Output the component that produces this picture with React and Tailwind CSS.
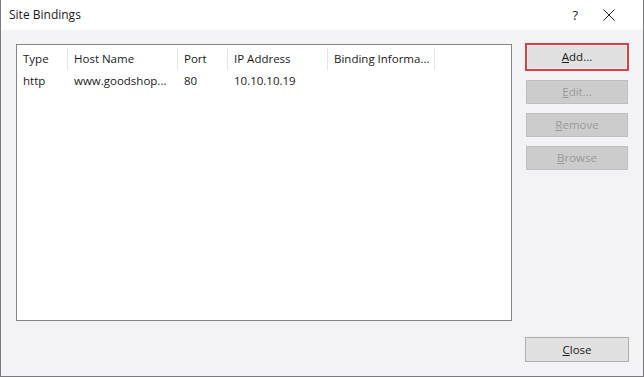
export default function App() {
  const cols = [
    { label: "Type", w: "w-[51px]" },
    { label: "Host Name", w: "w-[110px]" },
    { label: "Port", w: "w-[50px]" },
    { label: "IP Address", w: "w-[100px]" },
    { label: "Binding Informa...", w: "w-[107px]" },
  ];
  const row = ["http", "www.goodshop...", "80", "10.10.10.19", ""];

  return (
    <div className="w-[644px] h-[377px] bg-[#f3f2f5] border-l border-r border-b border-[#7a7a7a] flex flex-col text-[#1a1a1a] text-[11.5px] leading-none" style={{ fontFamily: "'Segoe UI','Open Sans',sans-serif" }}>
      {/* ── Title bar ── */}
      <div className="h-[30px] bg-white flex items-center pl-[8px] shrink-0">
        <span className="text-[12px]">Site Bindings</span>
        <span className="ml-auto mr-[25px] text-[13px]">?</span>
        <svg width="12" height="12" viewBox="0 0 12 12" className="mr-[28px]">
          <path d="M0.5 0.5 L11.5 11.5 M11.5 0.5 L0.5 11.5" stroke="#222" strokeWidth="1" fill="none" />
        </svg>
      </div>

      {/* ── Body ── */}
      <div className="flex flex-1 pl-[15px] pt-[14px] pr-[14px] pb-[14px]">
        <div className="w-[496px] h-[277px] bg-white border border-[#848484] flex flex-col">
          <div className="flex h-[28px] items-center">
            {cols.map(c => (
              <div key={c.label} className={`${c.w} h-[22px] flex items-center pl-[6px] border-r border-[#e5e5e5] whitespace-nowrap`}>
                {c.label}
              </div>
            ))}
          </div>
          <div className="flex h-[16px] items-center">
            {row.map((v, i) => (
              <div key={i} className={`${cols[i].w} pl-[6px] whitespace-nowrap`}>{v}</div>
            ))}
          </div>
        </div>

        <div className="ml-auto -mt-[1px] w-[104px] flex flex-col">
          <div className="h-[28px] border-[2px] border-[#e0403b] p-[1px]">
            <div className="h-full bg-[#e1e1e1] flex items-center justify-center">
              <span><u>A</u>dd...</span>
            </div>
          </div>
          {[["E", "dit..."], ["R", "emove"], ["B", "rowse"]].map(([a, b]) => (
            <div key={a} className="mt-[9px] mx-[1px] h-[24px] bg-[#cccccc] border border-[#bfbfbf] flex items-center justify-center text-[#9a9a9a]">
              <span><u>{a}</u>{b}</span>
            </div>
          ))}
          <div className="mt-auto h-[25px] bg-[#e1e1e1] border border-[#adadad] flex items-center justify-center">
            <span><u>C</u>lose</span>
          </div>
        </div>
      </div>
    </div>
  );
}
